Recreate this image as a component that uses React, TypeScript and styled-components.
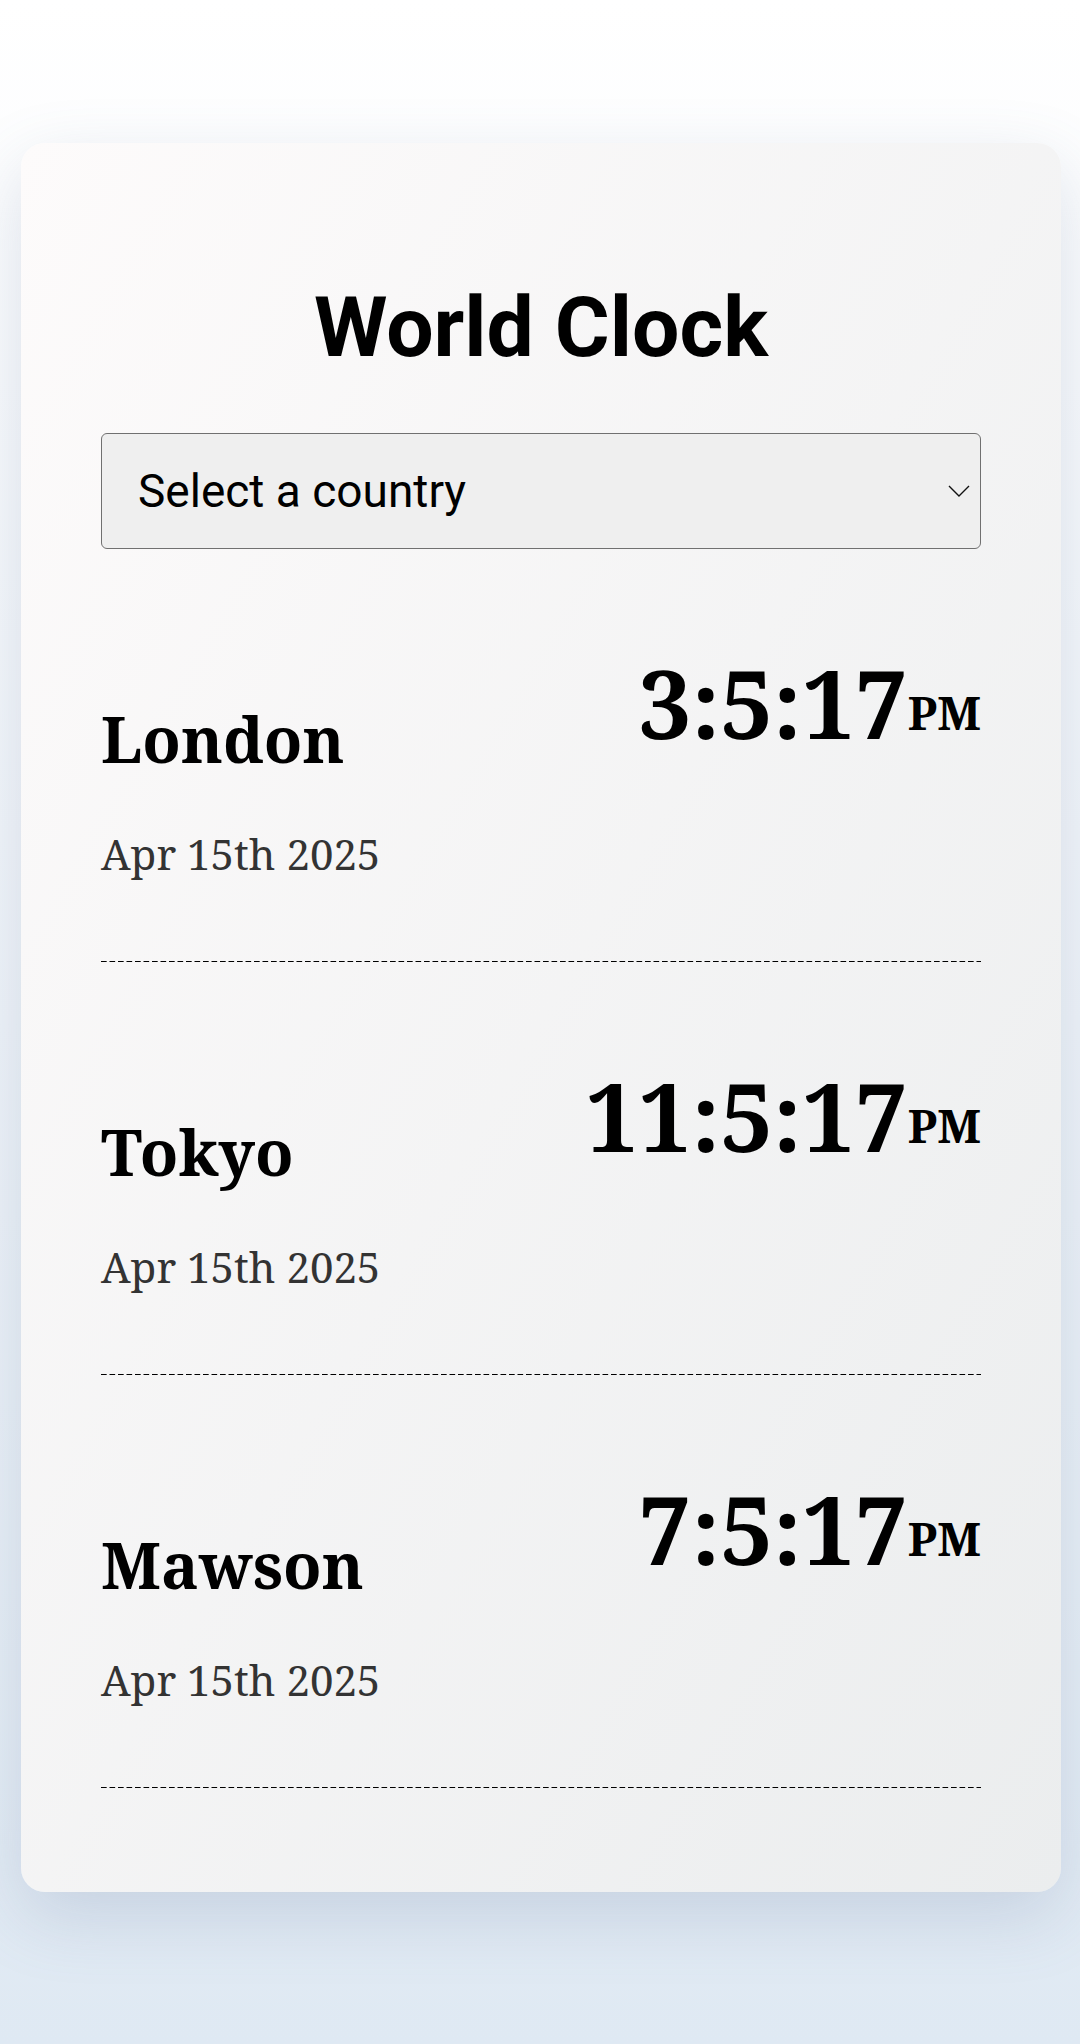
import styled, { createGlobalStyle } from "styled-components";

type CityPropsType = {
  Name: string
  Time: string
  Meridiem: string
  Date: string
}

const cities: CityPropsType[] = [
  { Name: "London", Time: "3:5:17", Meridiem: "PM", Date: "Apr 15th 2025" },
  { Name: "Tokyo", Time: "11:5:17", Meridiem: "PM", Date: "Apr 15th 2025" },
  { Name: "Mawson", Time: "7:5:17", Meridiem: "PM", Date: "Apr 15th 2025" },
]

const City = (props: CityPropsType) => {
  return (
    <CityRow>
      <CityInfo>
        <CityName>{props.Name}</CityName>
        <CityDate>{props.Date}</CityDate>
      </CityInfo>
      <CityTime>
        {props.Time}
        <Meridiem>{props.Meridiem}</Meridiem>
      </CityTime>
    </CityRow>
  )
}

export default function App() {
  return (
    <>
      <GlobalStyle />
      <Page>
        <Card>
          <Title>World Clock</Title>
          <SelectWrapper>
            <CountrySelect defaultValue="">
              <option value="">Select a country</option>
              <option value="London">London</option>
              <option value="Tokyo">Tokyo</option>
              <option value="Mawson">Mawson</option>
            </CountrySelect>
            <Chevron width="22" height="12" viewBox="0 0 22 12">
              <path d="M1 1 L11 11 L21 1" fill="none" stroke="#111" strokeWidth="1.4" />
            </Chevron>
          </SelectWrapper>
          {cities.map((c) => (
            <City key={c.Name} {...c} />
          ))}
        </Card>
      </Page>
    </>
  )
}

const GlobalStyle = createGlobalStyle`
  * { box-sizing: border-box; }
  body {
    margin: 0;
    font-family: "Noto Serif", "DejaVu Serif", serif;
  }
`

const Page = styled.div`
  min-height: 2044px;
  background: linear-gradient(to top, #dfe9f3 0%, #ffffff 100%);
  padding: 143px 19px 0 21px;
`

const Card = styled.div`
  background: linear-gradient(120deg, #fdfbfb 0%, #ebedee 100%);
  border-radius: 24px;
  box-shadow: 0 24px 70px rgba(90, 110, 150, 0.2);
  padding: 143px 80px 104px;
`

const Title = styled.h1`
  margin: 0 0 63px;
  font-family: Roboto, "Liberation Sans", sans-serif;
  font-weight: 700;
  font-size: 84px;
  line-height: 1;
  text-align: center;
  color: #000;
`

const SelectWrapper = styled.div`
  position: relative;
`

const CountrySelect = styled.select`
  appearance: none;
  display: block;
  width: 100%;
  height: 116px;
  padding: 0 36px;
  background: #efefef;
  border: 1.5px solid #707070;
  border-radius: 6px;
  font-family: Roboto, "Liberation Sans", sans-serif;
  font-size: 46px;
  color: #000;
  outline: none;
`

const Chevron = styled.svg`
  position: absolute;
  right: 11px;
  top: 52px;
  pointer-events: none;
`

const CityRow = styled.div`
  display: flex;
  justify-content: space-between;
  align-items: flex-start;
  height: 413px;
  padding-top: 107px;
  background: linear-gradient(to right, #000 5.5px, transparent 5.5px) left bottom / 8.5px 1px repeat-x;
`

const CityInfo = styled.div`
  display: flex;
  flex-direction: column;
  padding-top: 51px;
`

const CityName = styled.h2`
  margin: 0;
  font-size: 63px;
  font-weight: 700;
  line-height: 1;
  color: #000;
`

const CityDate = styled.p`
  margin: 63px 0 0;
  font-size: 42px;
  line-height: 1;
  color: #333;
`

const CityTime = styled.div`
  font-size: 94px;
  font-weight: 700;
  line-height: 1;
  color: #000;
`

const Meridiem = styled.span`
  font-size: 46px;
  vertical-align: 9px;
`
